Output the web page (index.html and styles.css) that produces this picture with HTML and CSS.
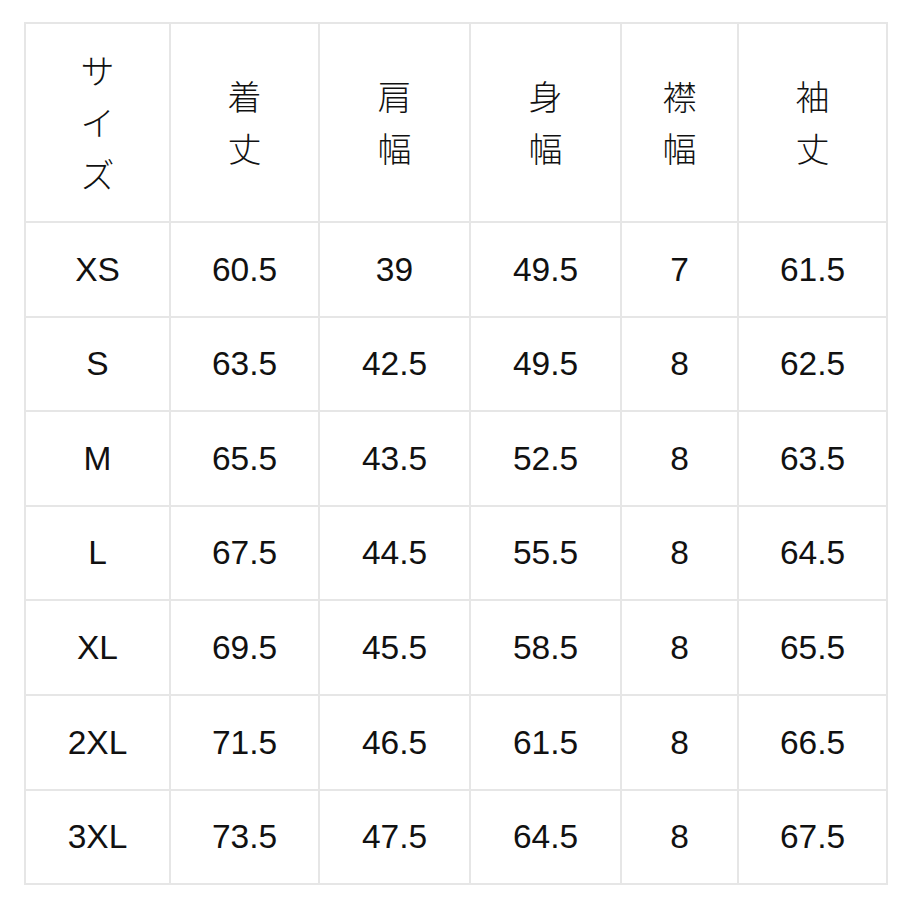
FILE: index.html
```html
<!DOCTYPE html>
<html lang="ja">
<head>
<meta charset="utf-8">
<link rel="stylesheet" href="styles.css">
</head>
<body>
<div class="chart">
  <div class="cell head">サ<br>イ<br>ズ</div>
  <div class="cell head">着<br>丈</div>
  <div class="cell head">肩<br>幅</div>
  <div class="cell head">身<br>幅</div>
  <div class="cell head">襟<br>幅</div>
  <div class="cell head">袖<br>丈</div>

  <div class="cell">XS</div><div class="cell">60.5</div><div class="cell">39</div><div class="cell">49.5</div><div class="cell">7</div><div class="cell">61.5</div>
  <div class="cell">S</div><div class="cell">63.5</div><div class="cell">42.5</div><div class="cell">49.5</div><div class="cell">8</div><div class="cell">62.5</div>
  <div class="cell">M</div><div class="cell">65.5</div><div class="cell">43.5</div><div class="cell">52.5</div><div class="cell">8</div><div class="cell">63.5</div>
  <div class="cell">L</div><div class="cell">67.5</div><div class="cell">44.5</div><div class="cell">55.5</div><div class="cell">8</div><div class="cell">64.5</div>
  <div class="cell">XL</div><div class="cell">69.5</div><div class="cell">45.5</div><div class="cell">58.5</div><div class="cell">8</div><div class="cell">65.5</div>
  <div class="cell">2XL</div><div class="cell">71.5</div><div class="cell">46.5</div><div class="cell">61.5</div><div class="cell">8</div><div class="cell">66.5</div>
  <div class="cell">3XL</div><div class="cell">73.5</div><div class="cell">47.5</div><div class="cell">64.5</div><div class="cell">8</div><div class="cell">67.5</div>
</div>
</body>
</html>
```

FILE: styles.css
```css
html, body {
  margin: 0;
  padding: 0;
  background: #ffffff;
}

body {
  font-family: "Liberation Sans", Arial, "Noto Sans CJK JP", sans-serif;
  color: #111111;
}

.chart {
  margin: 22px 0 0 24px;
  width: max-content;
  display: grid;
  grid-template-columns: 143px 147px 149px 149px 115px 147px;
  grid-template-rows: 197px repeat(7, 92.6px);
  gap: 2px;
  padding: 2px;
  background: #e6e6e6;
}

.cell {
  background: #ffffff;
  display: flex;
  align-items: center;
  justify-content: center;
  text-align: center;
  font-size: 33.5px;
  line-height: 1;
}

.head {
  font-family: "Noto Sans CJK JP", sans-serif;
  font-weight: 300;
  font-size: 34px;
  line-height: 52px;
  padding-bottom: 2px;
}
```
